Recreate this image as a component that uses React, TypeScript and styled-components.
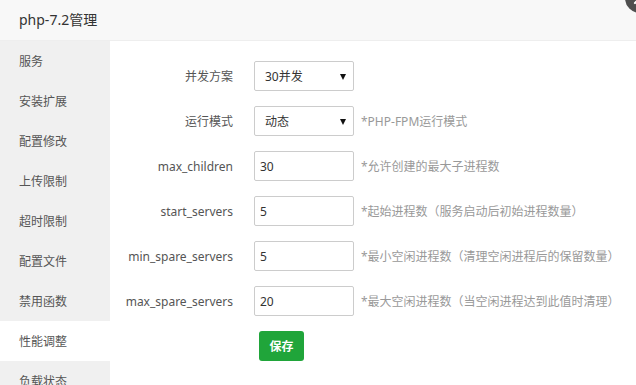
import React from "react";
import styled, { createGlobalStyle } from "styled-components";

const Global = createGlobalStyle`
  html, body { margin: 0; padding: 0; height: 385px; overflow: hidden; background: #fff; }
  body { font-family: "Noto Sans", "Noto Sans CJK SC", sans-serif; }
  * { box-sizing: border-box; }
`;

const Frame = styled.div`
  position: relative;
  width: 636px;
  height: 385px;
  overflow: hidden;
  background: #fff;
`;

const Header = styled.div`
  height: 41px;
  background: #f8f8f8;
  border-bottom: 1px solid #eee;
  padding-left: 19px;
  line-height: 40px;
  font-size: 14px;
  color: #333;
`;

const CloseBtn = styled.div`
  position: absolute;
  top: -17px;
  right: -19px;
  width: 30px;
  height: 30px;
  border-radius: 50%;
  background: #4f4f4f;
  display: flex;
  align-items: center;
  justify-content: center;
`;

const Body = styled.div`
  display: flex;
  height: 344px;
`;

const Sidebar = styled.div`
  width: 110px;
  background: #f0f0f0;
  display: flex;
  flex-direction: column;
  flex-shrink: 0;
`;

const NavItem = styled.div<{ $active?: boolean }>`
  height: 40px;
  line-height: 41px;
  padding-left: 19px;
  font-size: 12px;
  color: #555;
  background: ${(p) => (p.$active ? "#fff" : "transparent")};
  flex-shrink: 0;
`;

const Content = styled.div`
  flex: 1;
  padding: 20px 0 0 10px;
`;

const Row = styled.div`
  display: flex;
  align-items: center;
  height: 30px;
  margin-bottom: 15px;
`;

const Label = styled.span`
  width: 113px;
  margin-right: 21px;
  text-align: right;
  font-size: 12px;
  color: #555;
`;

const SelectBox = styled.div`
  position: relative;
  width: 100px;
  height: 30px;
  border: 1px solid #ccc;
  border-radius: 2px;
  padding-left: 10px;
  display: flex;
  align-items: center;
  font-size: 12px;
  color: #333;
`;

const Arrow = styled.span`
  position: absolute;
  right: 7px;
  top: 12px;
  width: 0;
  height: 0;
  border-left: 3.5px solid transparent;
  border-right: 3.5px solid transparent;
  border-top: 6px solid #111;
`;

const Input = styled.input`
  width: 100px;
  height: 30px;
  border: 1px solid #ccc;
  border-radius: 2px;
  padding: 0 5px;
  font-size: 12px;
  color: #333;
  font-family: inherit;
  outline: none;
`;

const Hint = styled.span`
  margin-left: 7px;
  font-size: 12px;
  color: #999;
`;

const Spacer = styled.span`
  width: 134px;
  flex-shrink: 0;
`;

const SaveBtn = styled.button`
  margin-left: 5px;
  width: 45px;
  height: 30px;
  border: none;
  border-radius: 3px;
  background: #20a53a;
  color: #fff;
  font-size: 12px;
  font-weight: bold;
  font-family: inherit;
  padding: 0;
`;

const navItems = [
  "服务",
  "安装扩展",
  "配置修改",
  "上传限制",
  "超时限制",
  "配置文件",
  "禁用函数",
  "性能调整",
  "负载状态",
  "FPM日志",
];

const fields = [
  { label: "max_children", value: "30", hint: "*允许创建的最大子进程数" },
  { label: "start_servers", value: "5", hint: "*起始进程数（服务启动后初始进程数量）" },
  { label: "min_spare_servers", value: "5", hint: "*最小空闲进程数（清理空闲进程后的保留数量）" },
  { label: "max_spare_servers", value: "20", hint: "*最大空闲进程数（当空闲进程达到此值时清理）" },
];

export default function App() {
  return (
    <Frame>
      <Global />
      <Header>php-7.2管理</Header>
      <CloseBtn>
        <svg width="30" height="30" viewBox="0 0 30 30">
          <path d="M10 10 L20 20 M20 10 L10 20" stroke="#fff" strokeWidth="2.2" strokeLinecap="round" />
        </svg>
      </CloseBtn>
      <Body>
        <Sidebar>
          {navItems.map((n) => (
            <NavItem key={n} $active={n === "性能调整"}>
              {n}
            </NavItem>
          ))}
        </Sidebar>
        <Content>
          <Row>
            <Label>并发方案</Label>
            <SelectBox>
              30并发
              <Arrow />
            </SelectBox>
          </Row>
          <Row>
            <Label>运行模式</Label>
            <SelectBox>
              动态
              <Arrow />
            </SelectBox>
            <Hint>*PHP-FPM运行模式</Hint>
          </Row>
          {fields.map((f) => (
            <Row key={f.label}>
              <Label>{f.label}</Label>
              <Input defaultValue={f.value} />
              <Hint>{f.hint}</Hint>
            </Row>
          ))}
          <Row>
            <Spacer />
            <SaveBtn>保存</SaveBtn>
          </Row>
        </Content>
      </Body>
    </Frame>
  );
}
